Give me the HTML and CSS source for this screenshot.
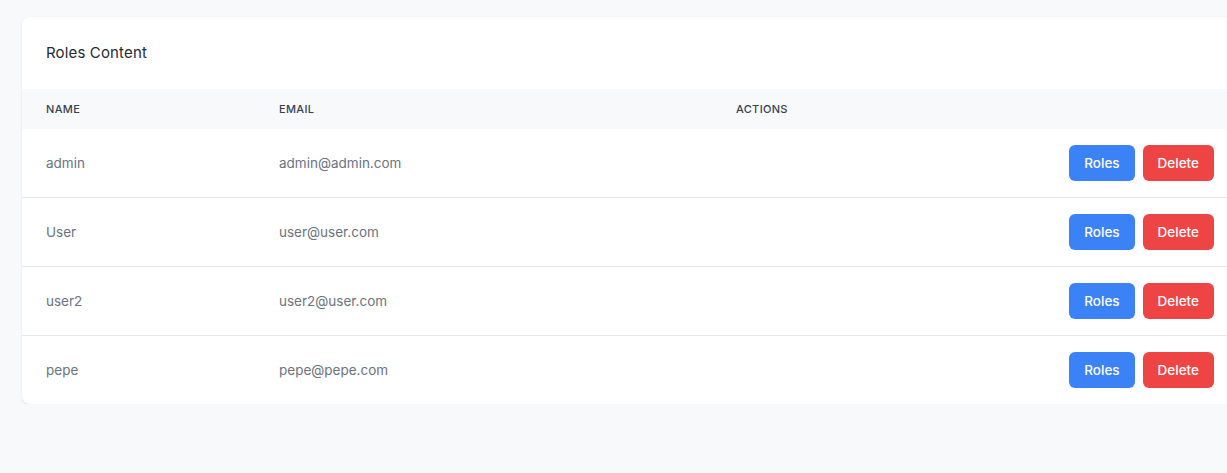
FILE: index.html
```html
<!DOCTYPE html>
<html>
<head>
<meta charset="utf-8">
<link rel="stylesheet" href="styles.css">
</head>
<body>
<div class="page">
  <div class="card">
    <div class="card-title">Roles Content</div>
    <table class="table">
      <thead>
        <tr>
          <th class="col-name">Name</th>
          <th class="col-email">Email</th>
          <th class="col-actions">Actions</th>
        </tr>
      </thead>
      <tbody>
        <tr>
          <td>admin</td>
          <td>admin@admin.com</td>
          <td class="actions"><div class="btns"><button class="btn btn-blue">Roles</button><button class="btn btn-red">Delete</button></div></td>
        </tr>
        <tr>
          <td>User</td>
          <td>user@user.com</td>
          <td class="actions"><div class="btns"><button class="btn btn-blue">Roles</button><button class="btn btn-red">Delete</button></div></td>
        </tr>
        <tr>
          <td>user2</td>
          <td>user2@user.com</td>
          <td class="actions"><div class="btns"><button class="btn btn-blue">Roles</button><button class="btn btn-red">Delete</button></div></td>
        </tr>
        <tr>
          <td>pepe</td>
          <td>pepe@pepe.com</td>
          <td class="actions"><div class="btns"><button class="btn btn-blue">Roles</button><button class="btn btn-red">Delete</button></div></td>
        </tr>
      </tbody>
    </table>
  </div>
</div>
</body>
</html>
```

FILE: styles.css
```css
html, body {
  margin: 0;
  padding: 0;
  background: #f8f9fb;
  overflow: hidden;
  font-family: Inter, "Noto Sans", sans-serif;
}
.page {
  padding: 17px 0 0 22px;
  width: 1300px;
}
.card {
  width: 1216px;
  background: #ffffff;
  border-radius: 8px;
  box-shadow: 0 1px 3px rgba(0,0,0,0.08), 0 1px 2px rgba(0,0,0,0.04);
  overflow: hidden;
}
.card-title {
  padding: 24px;
  font-size: 15px;
  line-height: 24px;
  color: #1f2937;
  font-weight: 400;
  letter-spacing: 0.01em;
}
.table {
  width: 100%;
  border-collapse: collapse;
  table-layout: fixed;
}
.table th {
  background: #f8f9fb;
  text-align: left;
  padding: 12px 24px;
  height: 16px;
  font-size: 11px;
  line-height: 16px;
  font-weight: 500;
  letter-spacing: 0.03em;
  color: #374151;
  text-transform: uppercase;
}
.col-name { width: 185px; }
.col-email { width: 409px; }
.table td {
  padding: 16px 24px;
  font-size: 13.5px;
  line-height: 36px;
  color: #6b7280;
  border-bottom: 1px solid #e5e7eb;
}
.table tbody tr:last-child td {
  border-bottom: none;
}
.btns {
  display: flex;
  justify-content: flex-end;
  gap: 8px;
}
.btn {
  height: 36px;
  border: none;
  border-radius: 6px;
  padding: 0 15px;
  font-family: Inter, "Noto Sans", sans-serif;
  font-size: 13.5px;
  font-weight: 500;
  color: #ffffff;
  cursor: pointer;
}
.btn-blue { background: #3b82f6; }
.btn-red { background: #ef4444; }
```
